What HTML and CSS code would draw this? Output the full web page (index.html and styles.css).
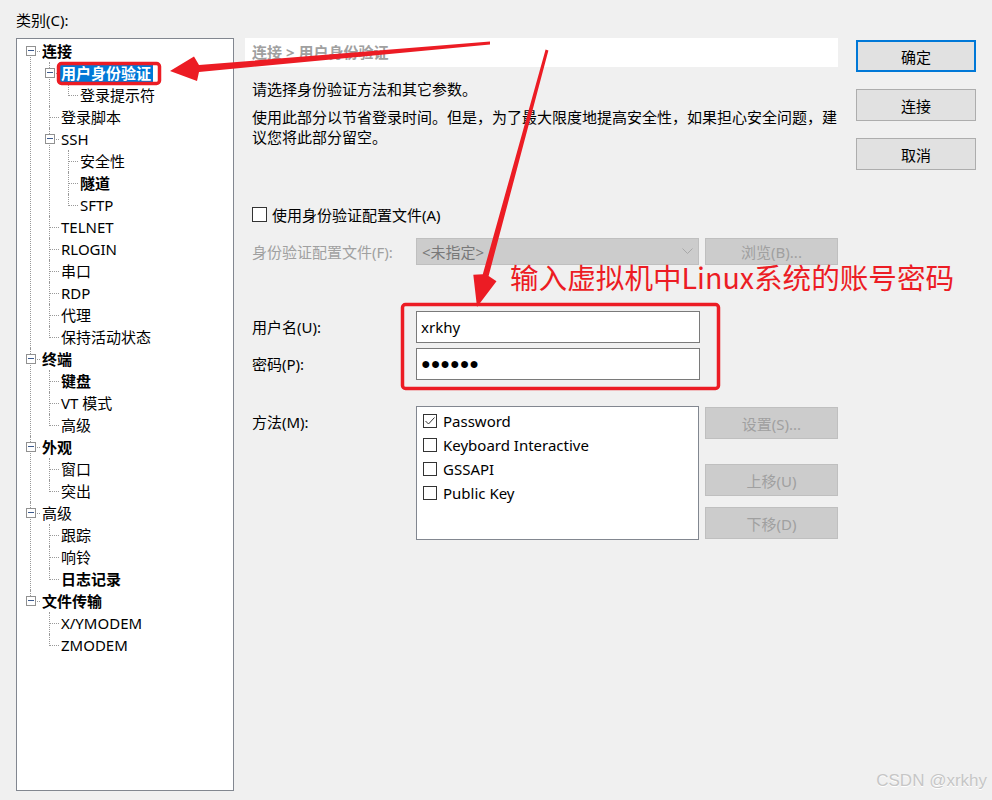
FILE: index.html
```html
<!DOCTYPE html>
<html>
<head>
	<meta charset="utf-8">
	<title>会话选项 - 用户身份验证</title>
	<link rel="stylesheet" href="styles.css">
</head>
<body>
<div class="dlg">
	<div class="left">
		<div class="cat-label">类别(C):</div>
		<div class="treebox">
			<ul class="tree">
				<li><div class="row"><span class="exp"></span><span class="lbl b">连接</span></div>
					<ul>
						<li><div class="row"><span class="exp"></span><span class="lbl b sel">用户身份验证</span></div>
							<ul>
								<li><div class="row"><span class="lbl">登录提示符</span></div></li>
							</ul>
						</li>
						<li><div class="row"><span class="lbl">登录脚本</span></div></li>
						<li><div class="row"><span class="exp"></span><span class="lbl">SSH</span></div>
							<ul>
								<li><div class="row"><span class="lbl">安全性</span></div></li>
								<li><div class="row"><span class="lbl b">隧道</span></div></li>
								<li><div class="row"><span class="lbl">SFTP</span></div></li>
							</ul>
						</li>
						<li><div class="row"><span class="lbl">TELNET</span></div></li>
						<li><div class="row"><span class="lbl">RLOGIN</span></div></li>
						<li><div class="row"><span class="lbl">串口</span></div></li>
						<li><div class="row"><span class="lbl">RDP</span></div></li>
						<li><div class="row"><span class="lbl">代理</span></div></li>
						<li><div class="row"><span class="lbl">保持活动状态</span></div></li>
					</ul>
				</li>
				<li><div class="row"><span class="exp"></span><span class="lbl b">终端</span></div>
					<ul>
						<li><div class="row"><span class="lbl b">键盘</span></div></li>
						<li><div class="row"><span class="lbl">VT 模式</span></div></li>
						<li><div class="row"><span class="lbl">高级</span></div></li>
					</ul>
				</li>
				<li><div class="row"><span class="exp"></span><span class="lbl b">外观</span></div>
					<ul>
						<li><div class="row"><span class="lbl">窗口</span></div></li>
						<li><div class="row"><span class="lbl">突出</span></div></li>
					</ul>
				</li>
				<li><div class="row"><span class="exp"></span><span class="lbl">高级</span></div>
					<ul>
						<li><div class="row"><span class="lbl">跟踪</span></div></li>
						<li><div class="row"><span class="lbl">响铃</span></div></li>
						<li><div class="row"><span class="lbl b">日志记录</span></div></li>
					</ul>
				</li>
				<li><div class="row"><span class="exp"></span><span class="lbl b">文件传输</span></div>
					<ul>
						<li><div class="row"><span class="lbl">X/YMODEM</span></div></li>
						<li><div class="row"><span class="lbl">ZMODEM</span></div></li>
					</ul>
				</li>
			</ul>
		</div>
	</div>

	<div class="main">
		<div class="crumb">连接 &gt; 用户身份验证</div>
		<p class="desc">请选择身份验证方法和其它参数。</p>
		<p class="desc">使用此部分以节省登录时间。但是，为了最大限度地提高安全性，如果担心安全问题，建<br>议您将此部分留空。</p>

		<div class="chk-row"><span class="box"></span>使用身份验证配置文件(A)</div>

		<div class="frow prof">
			<span class="flabel">身份验证配置文件(F):</span>
			<div class="combo">
				<span>&lt;未指定&gt;</span>
				<svg width="11" height="7" viewBox="0 0 11 7"><path d="M0.5 0.5 L5.5 5.5 L10.5 0.5" fill="none" stroke="#a8a8a8" stroke-width="1"/></svg>
			</div>
			<button class="btn dis browse">浏览(B)...</button>
		</div>

		<div class="frow field user">
			<span class="flabel">用户名(U):</span>
			<div class="input">xrkhy</div>
		</div>
		<div class="frow field pass">
			<span class="flabel">密码(P):</span>
			<div class="input dots">●●●●●●</div>
		</div>

		<div class="frow meth">
			<span class="flabel">方法(M):</span>
			<div class="list">
				<div class="item"><span class="box sm"><svg width="12" height="12" viewBox="0 0 12 12"><path d="M1.5 6 L4.5 9 L10.5 2.5" fill="none" stroke="#333" stroke-width="1"/></svg></span>Password</div>
				<div class="item"><span class="box sm"></span>Keyboard Interactive</div>
				<div class="item"><span class="box sm"></span>GSSAPI</div>
				<div class="item"><span class="box sm"></span>Public Key</div>
			</div>
			<div class="mbtns">
				<button class="btn dis">设置(S)...</button>
				<button class="btn dis up">上移(U)</button>
				<button class="btn dis down">下移(D)</button>
			</div>
		</div>
	</div>

	<div class="side">
		<button class="btn def">确定</button>
		<button class="btn">连接</button>
		<button class="btn">取消</button>
	</div>
</div>

<!-- 标注 -->
<svg class="marks" width="992" height="800" viewBox="0 0 992 800">
	<rect x="58.5" y="63.5" width="101" height="20" rx="3" fill="none" stroke="#ec1c24" stroke-width="3.5"/>
	<rect x="402.5" y="304.5" width="316" height="84" rx="3" fill="none" stroke="#ec1c24" stroke-width="3.5"/>
	<polygon points="490,41.5 199,65 194,56.5 170,71 197,81 199,72 490,44.5" fill="#ec1c24"/>
	<polygon points="545.6,49.6 482.8,274.3 473.3,274.8 477,307 496.5,281.2 488.6,275.9 548.4,50.4" fill="#ec1c24"/>
</svg>
<div class="note">输入虚拟机中Linux系统的账号密码</div>
<div class="wm">CSDN @xrkhy</div>
</body>
</html>
```

FILE: styles.css
```css
*{
	box-sizing: border-box;
}
body{
	margin: 0;
	width: 992px;
	height: 800px;
	overflow: hidden;
	position: relative;
	background-color: #f0f0f0;
	font-family: "Noto Sans", "Noto Sans CJK SC", sans-serif;
	font-size: 15px;
	color: #000;
}
.dlg{
	display: flex;
	padding: 10px 0 0 16px;
}

/* 左侧类别树 */
.left{
	width: 218px;
}
.cat-label{
	line-height: 20px;
	margin-bottom: 8px;
}
.treebox{
	height: 753px;
	border: 1px solid #828790;
	background-color: #fff;
}
.tree, .tree ul{
	list-style: none;
	margin: 0;
	padding: 0;
}
.tree{
	padding-top: 1px;
}
.tree ul{
	margin-left: 19px;
}
.tree li{
	position: relative;
}
.tree li::before{
	content: "";
	position: absolute;
	left: 14px;
	top: 11px;
	width: 9px;
	border-top: 1px dotted #999;
}
.tree li::after{
	content: "";
	position: absolute;
	left: 13px;
	top: 0;
	bottom: 0;
	border-left: 1px dotted #999;
}
.tree > li:first-child::after{
	top: 11px;
}
.tree li:last-child::after{
	bottom: auto;
	height: 12px;
}
.row{
	position: relative;
	height: 22px;
	display: flex;
	align-items: center;
	padding-left: 23px;
}
.exp{
	position: absolute;
	left: 9px;
	top: 6px;
	width: 10px;
	height: 10px;
	border: 1px solid #919191;
	background-color: #fff;
	z-index: 1;
}
.exp::after{
	content: "";
	position: absolute;
	left: 1px;
	top: 3px;
	width: 6px;
	height: 1px;
	background-color: #3c5a8e;
}
.lbl{
	line-height: 19px;
	padding: 0 2px;
	white-space: nowrap;
}
.lbl.b{
	font-weight: 700;
}
.lbl.sel{
	background-color: #0078d7;
	color: #fff;
}

/* 中间内容 */
.main{
	width: 593px;
	margin: 28px 0 0 11px;
}
.crumb{
	height: 29px;
	line-height: 29px;
	padding-left: 7px;
	background-color: #fff;
	color: #a0a0a0;
	font-weight: 700;
}
.desc{
	margin: 12px 0 0;
	padding-left: 7px;
	line-height: 20px;
	white-space: nowrap;
}
.desc + .desc{
	margin-top: 8px;
}
.chk-row{
	display: flex;
	align-items: center;
	height: 20px;
	margin-top: 57px;
	padding-left: 7px;
}
.box{
	width: 15px;
	height: 15px;
	border: 1px solid #333;
	background-color: #fff;
	margin-right: 5px;
	display: flex;
	align-items: center;
	justify-content: center;
}
.box.sm{
	width: 14px;
	height: 14px;
	margin-right: 6px;
}
.frow{
	display: flex;
	padding-left: 7px;
}
.flabel{
	width: 164px;
	flex-shrink: 0;
	line-height: 20px;
}
.prof{
	margin-top: 14px;
	height: 27px;
	align-items: center;
}
.prof .flabel{
	color: #a0a0a0;
}
.combo{
	width: 283px;
	height: 27px;
	display: flex;
	align-items: center;
	justify-content: space-between;
	padding: 0 5px 0 5px;
	background-color: #ccc;
	border: 1px solid #bfbfbf;
	color: #787878;
}
.btn{
	height: 32px;
	padding: 0;
	border: 1px solid #adadad;
	background-color: #e1e1e1;
	font: inherit;
	color: #000;
}
.btn.dis{
	width: 133px;
	background-color: #ccc;
	border-color: #bfbfbf;
	color: #a0a0a0;
}
.browse{
	height: 27px;
	margin-left: 6px;
	line-height: 20px;
}
.field{
	height: 32px;
	align-items: center;
}
.user{
	margin-top: 46px;
}
.pass{
	margin-top: 5px;
}
.input{
	width: 284px;
	height: 32px;
	line-height: 30px;
	padding-left: 4px;
	border: 1px solid #7a7a7a;
	background-color: #fff;
}
.dots{
	font-family: "Liberation Sans", sans-serif;
	font-size: 16px;
}
.meth{
	margin-top: 26px;
	align-items: flex-start;
}
.meth .flabel{
	margin-top: 6px;
}
.list{
	width: 283px;
	height: 134px;
	padding: 2px 0 0 6px;
	border: 1px solid #828790;
	background-color: #fff;
}
.item{
	height: 24px;
	display: flex;
	align-items: center;
}
.mbtns{
	display: flex;
	flex-direction: column;
	margin-left: 6px;
	padding-top: 1px;
}
.mbtns .up{
	margin-top: 25px;
}
.mbtns .down{
	margin-top: 11px;
}

/* 右侧按钮 */
.side{
	width: 120px;
	margin: 30px 0 0 18px;
	display: flex;
	flex-direction: column;
	gap: 17px;
}
.btn.def{
	border: 2px solid #0078d7;
}

/* 红色标注和水印 */
.marks{
	position: absolute;
	left: 0;
	top: 0;
	pointer-events: none;
}
.note{
	position: absolute;
	left: 510px;
	top: 267px;
	font-family: "Noto Sans CJK SC", sans-serif;
	font-size: 28.6px;
	line-height: 20px;
	color: #ec1c24;
	white-space: nowrap;
}
.wm{
	position: absolute;
	right: 5px;
	top: 771px;
	font-family: "Liberation Sans", sans-serif;
	font-size: 17px;
	color: #c6c6c6;
	text-shadow: 0 1px 0 #fff;
}
```
